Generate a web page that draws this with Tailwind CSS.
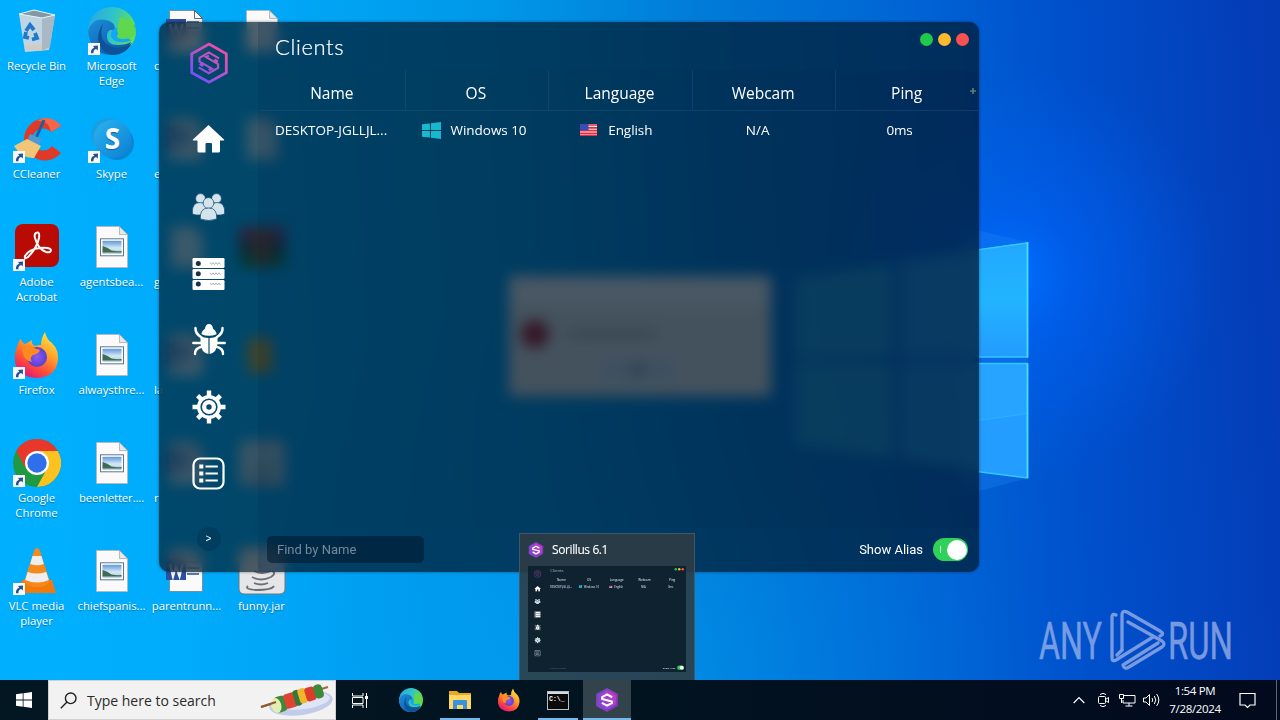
<!DOCTYPE html>
<html lang="en">
<head>
    <meta charset="UTF-8">
    <meta name="viewport" content="width=device-width, initial-scale=1.0">
    <title>Sorillus 6.1</title>
    <script src="https://cdn.jsdelivr.net/npm/@tailwindcss/browser@4"></script>
</head>
<body class="relative w-[1280px] h-[720px] overflow-hidden bg-[#0068d4] font-['Open_Sans','Noto_Sans',sans-serif] text-white">

    <!-- Shared icons -->
    <svg class="absolute w-0 h-0" aria-hidden="true">
        <defs>
            <linearGradient id="brand" gradientUnits="userSpaceOnUse" x1="4" y1="38" x2="34" y2="6"><stop offset="0" stop-color="#6a50ff"/><stop offset=".5" stop-color="#b452d0"/><stop offset="1" stop-color="#f0509a"/></linearGradient>
            <linearGradient id="brandFill" x1="0" y1="0" x2="1" y2="1"><stop offset="0" stop-color="#5b4fc4"/><stop offset=".5" stop-color="#9a3cc4"/><stop offset="1" stop-color="#6a35a8"/></linearGradient>
            <linearGradient id="brandCore" x1="0" y1="1" x2="1" y2="0"><stop offset="0" stop-color="#6d48d8"/><stop offset="1" stop-color="#d03cc0"/></linearGradient>
            <linearGradient id="edgeTop" x1="0" y1=".3" x2="1" y2=".5"><stop offset="0" stop-color="#2aa9e0"/><stop offset=".5" stop-color="#30c4c8"/><stop offset="1" stop-color="#6be04a"/></linearGradient>
            <linearGradient id="edgeLow" x1="0" y1="0" x2="1" y2="1"><stop offset="0" stop-color="#1a8fdd"/><stop offset="1" stop-color="#0f4f9e"/></linearGradient>
            <linearGradient id="fox" x1=".9" y1="0" x2=".3" y2="1"><stop offset="0" stop-color="#fff04a"/><stop offset=".4" stop-color="#ffa52a"/><stop offset=".75" stop-color="#ff4a3a"/><stop offset="1" stop-color="#e0157f"/></linearGradient>
            <radialGradient id="foxCore"><stop offset="0" stop-color="#8a5af0"/><stop offset="1" stop-color="#5b3fd0"/></radialGradient>
            <linearGradient id="photo" x1="0" y1="0" x2="0" y2="1"><stop offset="0" stop-color="#5f97dc"/><stop offset=".55" stop-color="#d4e8f4"/><stop offset="1" stop-color="#a9c8d8"/></linearGradient>
            <linearGradient id="skypeBg" x1="0" y1="0" x2="1" y2="1"><stop offset="0" stop-color="#2bb4ee"/><stop offset="1" stop-color="#0a7fd4"/></linearGradient>
        </defs>
        <symbol id="logo" viewBox="0 0 38 42">
            <path d="M19 2 36.300 11.800V30.600L19 40.200 1.700 30.600V11.800z" fill="none" stroke="url(#brand)" stroke-width="2.800"/>
            <path d="M29 16.300 18.800 10.400 9.500 15.800V19.600L21.800 26.700 18.600 28M8.600 25.300 18.800 31.200 28.100 25.800V22L15.800 14.900 19 13.600M28 19.500 24.500 17.500M9.600 22.100 13.100 24.100" fill="none" stroke="url(#brand)" stroke-width="2.100"/>
        </symbol>
        <symbol id="logoSolid" viewBox="0 0 38 42">
            <path d="M19 0 38 10.500V31.500L19 42 0 31.500V10.500z" fill="url(#brandFill)"/>
            <path d="M19 4 34.500 12.700V29.300L19 38 3.500 29.300V12.700z" fill="url(#brandCore)"/>
            <path d="M28 16.200 19 11.200 10.500 16V19.200L27.500 23.500V26.500L19 31 10 26" fill="none" stroke="#fff" stroke-width="3.600" stroke-linejoin="round"/>
        </symbol>
        <symbol id="home" viewBox="0 0 33 30"><path d="M16.500 1 32 15.500q.8 1-.5 1H28V27q0 1.500-1.500 1.500H20V20q0-1-1-1h-4.500q-1 0-1 1v8.500H7Q5.500 28.500 5.500 27V16.500H1.500q-1.300 0-.5-1z" fill="#fff"/></symbol>
        <symbol id="users" viewBox="0 0 33 28">
            <g fill="#d5e3ec" stroke="#0b4a6c" stroke-width=".7">
                <circle cx="8.500" cy="5.500" r="4.900"/><circle cx="24.500" cy="5.500" r="4.900"/>
                <path d="M.4 21q-1-11.500 7.600-11.500t7.500 12.500H4z"/><path d="M32.600 21q1-11.500-7.600-11.500t-7.500 12.500H29z"/>
                <circle cx="16.500" cy="10" r="5.400"/><path d="M8.300 26q-.8-11 8.200-11t8.200 11q-8 3-16.400 0z"/>
            </g>
        </symbol>
        <symbol id="servers" viewBox="0 0 33 32">
            <g fill="#fff"><rect x=".5" y="0" width="32" height="10" rx="1.300"/><rect x=".5" y="11" width="32" height="10" rx="1.300"/><rect x=".5" y="22" width="32" height="10" rx="1.300"/></g>
            <g fill="#173347"><circle cx="6.300" cy="5.500" r="2.500"/><circle cx="6.300" cy="15.800" r="2.500"/><circle cx="6.300" cy="26" r="2.500"/></g>
            <path d="M18 4.500l1.500 2 1.500-2 1.500 2 1.500-2 1.500 2 1.500-2 1.500 2M18 14.800l1.500 2 1.500-2 1.500 2 1.500-2 1.500 2 1.500-2 1.500 2M18 25l1.500 2 1.500-2 1.500 2 1.500-2 1.500 2 1.500-2 1.500 2" fill="none" stroke="#a3adb3" stroke-width=".9"/>
        </symbol>
        <symbol id="bug" viewBox="0 0 34 33">
            <path d="M9.500 11.300q0-3.500 3.500-5.600Q13.500 1 17 1t4 4.700q3.500 2.100 3.500 5.600-7.500 3-15 0z" fill="#fff"/>
            <path d="M8.500 13q3.500 2 7.900 2v16Q9 29.500 8.500 20zM25.500 13q-3.500 2-7.900 2v16Q25 29.500 25.500 20z" fill="#fff"/>
            <path d="M3.500 5Q3 10.500 9.500 14.500M30.500 5q.5 5.500-6 9.500M1.300 20h8M24.700 20h8M3 31q-.5-5.500 7-7.500M31 31q.5-5.500-7-7.500" fill="none" stroke="#fff" stroke-width="2.400" stroke-linecap="round"/>
        </symbol>
        <symbol id="gear" viewBox="0 0 34 34">
            <g stroke="#fff" stroke-width="4.400"><path d="M17 .5v33M.5 17h33M5.600 5.600l22.800 22.800M28.400 5.600 5.600 28.400"/></g>
            <circle cx="17" cy="17" r="12" fill="#fff"/><circle cx="17" cy="17" r="7.800" fill="none" stroke="#07486c" stroke-width="1.600"/><circle cx="17" cy="17" r="2.700" fill="#07486c"/>
        </symbol>
        <symbol id="list" viewBox="0 0 33 33">
            <rect x="1.500" y="1.500" width="30" height="30" rx="6.500" fill="none" stroke="#fff" stroke-width="2.200"/>
            <path d="M7.300 9.500h4M7.300 16.500h4M7.300 23.500h4" stroke="#fff" stroke-width="4"/><path d="M13.500 9.500h12.300M13.500 16.500h12.300M13.500 23.500h12.300" stroke="#fff" stroke-width="2"/>
        </symbol>
        <symbol id="win" viewBox="0 0 16 16"><path d="M0 2.200 6.700 1.300V7.600H0zM7.500 1.200 16 0v7.600H7.500zM0 8.400h6.700v6.300L0 13.800zM7.500 8.400H16V16l-8.500-1.200z" fill="currentColor"/></symbol>
        <symbol id="flag" viewBox="0 0 17 12">
            <rect width="17" height="12" fill="#f4f4f4"/><path d="M0 1h17M0 3.800h17M0 6.600h17M0 9.400h17M0 11.500h17" stroke="#e8283c" stroke-width="1.700"/><rect width="8.500" height="6.500" fill="#3a4cb4"/>
        </symbol>
        <symbol id="shortcut" viewBox="0 0 12 12"><rect width="12" height="12" fill="#f7f9fb"/><path d="M3 10.300Q2.500 5.800 6.300 4.800L5 3l5-.6-.2 5-1.700-1.300Q5.200 7 5.400 10.300z" fill="#27508f"/></symbol>
        <symbol id="sheet" viewBox="0 0 48 48"><path d="M8.500 3.500h23l8 8v33h-31z" fill="#fafafa" stroke="#bdb5ae" stroke-width=".8"/><path d="M31.500 3.500v8h8z" fill="#e2e8ee" stroke="#a5a09c" stroke-width=".7"/></symbol>
        <symbol id="imageDoc" viewBox="0 0 48 48">
            <use href="#sheet" width="48" height="48"/>
            <rect x="12.500" y="15.800" width="23" height="17" fill="#fff" stroke="#5d7690" stroke-width="1"/><rect x="14.500" y="17.800" width="19" height="13" fill="url(#photo)"/><path d="M14.500 23q5 1 9 4.500 5 1 10 .5v1.500h-19z" fill="#3f6b50"/>
        </symbol>
        <symbol id="wordDoc" viewBox="0 0 48 48">
            <path d="M8.500 3.500h23l8 8v33h-33v-41z" fill="#fafafa" stroke="#77808a" stroke-width=".8"/><path d="M31.500 3.500v8h8z" fill="#fff" stroke="#444" stroke-width=".8"/>
            <path d="M24 15h12M24 21h12M24 27h12" stroke="#2b4f9c" stroke-width="1.500"/><rect x="3" y="12" width="20" height="21" fill="#2b4fa3"/><path d="m7 17 3 12 3-10 3.500 10 3-12" fill="none" stroke="#fff" stroke-width="2.500"/>
        </symbol>
        <symbol id="edge" viewBox="0 0 48 48">
            <circle cx="24" cy="24" r="24" fill="url(#edgeTop)"/>
            <path d="M0 24Q4 10 18 13q10 2 9 11-7-3-8 4-1 10 11 10 8 0 13-3-6 13-20 13Q2 47 0 24z" fill="url(#edgeLow)"/>
            <path d="M15 17q-6 18 10 23 12 2 19-4-6 12-20 12-12-3-14-15 0-10 5-16z" fill="#0e5299"/>
            <path d="M27 21q-5 4-4 8 1 5 8 6 8 1 13-2-3 0-4-2 7-3 8-8 0-3-1-5z" fill="#10a8f6"/>
            <path d="M29 24q2 2 0 5 0 3 6 3 8 0 12-6l1-3-4-9-12-4z" fill="#5fd84e"/>
        </symbol>
        <symbol id="firefox" viewBox="0 0 48 48">
            <path d="M5 13q1-4 3-5 1 4 4 5l7-4q-1 4 3 6 3-1 6-1 0-7 4-13 2 8 7 11 7 7 6 17-2 17-21 18Q5 46 2 31q-1-10 3-18z" fill="url(#fox)"/>
            <circle cx="24" cy="26" r="10" fill="url(#foxCore)"/><path d="M8 15q8-3 13 2l6 2q-1 4-7 5-4 3-1 7-9-2-9-10z" fill="#ff8a22"/>
        </symbol>
        <symbol id="bin" viewBox="0 0 48 48">
            <path d="M6 7 42 8 36 43 12 45z" fill="#cfd9e0" opacity=".92"/><path d="M29 11 42 8 37 40 29 44z" fill="#a9b8c4"/><path d="M6 7 21 3 42 8 29 11z" fill="#8397a5" stroke="#eef3f6"/>
            <path d="M12 38l17 1v5l-15-2z" fill="#dcc7b4" opacity=".8"/>
            <path d="m13 24 4-6 4 5M22 26l2 5-5 1.500M16 31l-4-1 1-5" fill="none" stroke="#1f78cc" stroke-width="3.800"/>
        </symbol>
        <symbol id="ccleaner" viewBox="0 0 48 48">
            <path d="M48 11A21 21 0 1 0 48 38L39 31A11 11 0 1 1 38 17z" fill="#e03a26"/><path d="M48 11q-6-9-18-8l-6 3q12-1 14 11z" fill="#f4674a"/>
            <path d="m31 5-8 18" stroke="#1f5fa0" stroke-width="3"/><path d="m17 19 12 5-4 7-11-5z" fill="#4c9bd2"/><path d="M14 24 1 31q8 13 20 12l7-12z" fill="#f2c679"/>
        </symbol>
        <symbol id="acrobat" viewBox="0 0 48 48">
            <rect x="2" y="1" width="44" height="43" rx="8" fill="#b90b04"/>
            <path d="M23 10q4-2 3 5-2 10-11 19-4 3-3-1 4-7 15-8 10-1 11 2 0 3-5 2-8-3-11-14-1-4 1-5z" fill="none" stroke="#fff" stroke-width="2"/>
        </symbol>
        <symbol id="chrome" viewBox="0 0 48 48">
            <circle cx="24" cy="24" r="24" fill="#1e9a45"/><path d="M3.200 12A24 24 0 0 1 44.800 12L24 13 13 30z" fill="#e8372b"/><path d="M24 12H44.800A24 24 0 0 1 24 48L35 28z" fill="#fcc320"/><circle cx="24" cy="24" r="12" fill="#fff"/><circle cx="24" cy="24" r="9.700" fill="#2f6fea"/>
        </symbol>
        <symbol id="vlc" viewBox="0 0 48 48">
            <path d="M9 33h30l4 13H5z" fill="#f27a0c"/><path d="M24 1q2 0 3 3l10 31q-4 5-13 5t-13-5L21 4q1-3 3-3z" fill="#f58a1c"/>
            <path d="M19.500 9h9l2.300 8q-6 2.500-13.600 0zM14.700 25q9 3 18.600 0l2.500 8q-11 5-23.600 0z" fill="#eee"/>
        </symbol>
        <symbol id="java" viewBox="0 0 48 48">
            <rect x="1" y="1" width="46" height="46" rx="5" fill="#e6e6e8" stroke="#777" stroke-width="1"/>
            <path d="M25 7q-8 6-2 13M16 24q8 4 17 0M14 30q9 5 19 0M16 36q7 3 14 0M34 24q5 2-1 6M10 39q-4 3 8 4 16 0 18-4" fill="none" stroke="#6b7078" stroke-width="1.800"/>
        </symbol>
    </svg>

    <!-- Wallpaper -->
    <svg class="absolute inset-0" width="1280" height="720" viewBox="0 0 1280 720" aria-hidden="true">
        <defs>
            <linearGradient id="sky" gradientUnits="userSpaceOnUse" x1="0" y1="400" x2="1280" y2="330">
                <stop offset="0" stop-color="#00b0ff"/><stop offset=".22" stop-color="#00a9f8"/><stop offset=".4" stop-color="#0098e8"/><stop offset=".56" stop-color="#007cd8"/><stop offset=".74" stop-color="#0062d4"/><stop offset=".84" stop-color="#0050cc"/><stop offset="1" stop-color="#043cb6"/>
            </linearGradient>
            <radialGradient id="glow" gradientUnits="userSpaceOnUse" cx="1010" cy="275" r="210"><stop offset="0" stop-color="#0070ff"/><stop offset=".3" stop-color="#0064fa" stop-opacity=".6"/><stop offset="1" stop-color="#0060f0" stop-opacity="0"/></radialGradient>
            <radialGradient id="low" gradientUnits="userSpaceOnUse" cx="600" cy="700" r="420"><stop offset="0" stop-color="#00a0f8" stop-opacity=".5"/><stop offset="1" stop-color="#0080e8" stop-opacity="0"/></radialGradient>
            <linearGradient id="pane" x1="0" y1="0" x2="0" y2="1"><stop offset="0" stop-color="#22a8ff"/><stop offset=".5" stop-color="#22b4ff"/><stop offset="1" stop-color="#239bff"/></linearGradient>
        </defs>
        <rect width="1280" height="720" fill="url(#sky)"/>
        <rect width="1280" height="720" fill="url(#low)"/>
        <rect width="1280" height="720" fill="url(#glow)"/>
        <path d="M960 226 1028 242V478L960 496z" fill="#1a80f4" opacity=".35"/>
        <path d="M795 278 893 263V357H795zM795 363H893V458L795 446z" fill="#22a0e0" opacity=".85"/>
        <path d="M900 261 979 249.500V357H900zM900 363H979V471L900 459z" fill="#2296ee" opacity=".85"/>
        <path d="M977 249.500 1028 242V357H977z" fill="url(#pane)"/>
        <path d="M977 363H1028V478L977 471z" fill="#239dff"/>
        <path d="M977 363H1028V413L977 420z" fill="#27a4ff"/>
        <path d="M977 420.500 1028 413.500" stroke="#2cb2ff"/>
        <path d="M977 249.800 1027.500 243V357H977M977 363.500h50.500V478L977 471.500" fill="none" stroke="#35c8ff" stroke-width="1.300"/>
        <path d="M1027.500 242V357.500M1027.500 363.500V478" stroke="#46e0ff" stroke-width="1.700"/>
    </svg>

    <!-- Desktop icons -->
    <div class="absolute -left-[1px] top-[7px] grid grid-flow-col grid-rows-[repeat(6,108px)] auto-cols-[75px] text-center text-[11.3px] leading-[15px] [text-shadow:0_1px_1px_rgba(0,0,0,0.35)]">
        <div class="flex flex-col items-center"><svg class="size-12 mb-[3px]"><use href="#bin"/></svg><span class="whitespace-nowrap">Recycle Bin</span></div>
        <div class="relative flex flex-col items-center"><svg class="size-12 mb-[3px]"><use href="#ccleaner"/></svg><svg class="absolute left-[13.5px] top-[36px] size-3"><use href="#shortcut"/></svg><span>CCleaner</span></div>
        <div class="relative flex flex-col items-center"><svg class="size-12 mb-[3px]"><use href="#acrobat"/></svg><svg class="absolute left-[13.5px] top-[36px] size-3"><use href="#shortcut"/></svg><span>Adobe<br>Acrobat</span></div>
        <div class="relative flex flex-col items-center"><svg class="size-12 mb-[3px]"><use href="#firefox"/></svg><svg class="absolute left-[13.5px] top-[36px] size-3"><use href="#shortcut"/></svg><span>Firefox</span></div>
        <div class="relative flex flex-col items-center"><svg class="size-12 mb-[3px]"><use href="#chrome"/></svg><svg class="absolute left-[13.5px] top-[36px] size-3"><use href="#shortcut"/></svg><span>Google<br>Chrome</span></div>
        <div class="relative flex flex-col items-center"><svg class="size-12 mb-[3px]"><use href="#vlc"/></svg><svg class="absolute left-[13.5px] top-[36px] size-3"><use href="#shortcut"/></svg><span class="whitespace-nowrap">VLC media<br>player</span></div>

        <div class="relative flex flex-col items-center"><svg class="size-12 mb-[3px]"><use href="#edge"/></svg><svg class="absolute left-[13.5px] top-[36px] size-3"><use href="#shortcut"/></svg><span>Microsoft<br>Edge</span></div>
        <div class="relative flex flex-col items-center">
            <svg class="size-12 mb-[3px]" viewBox="0 0 48 48"><circle cx="20" cy="20" r="17" fill="#1b9de2"/><circle cx="29" cy="28" r="17" fill="#0a85d2"/><circle cx="24.500" cy="24" r="19" fill="url(#skypeBg)"/><text x="24.500" y="34" text-anchor="middle" font-family="Open Sans" font-weight="700" font-size="28" fill="#fff">S</text></svg>
            <svg class="absolute left-[13.5px] top-[36px] size-3"><use href="#shortcut"/></svg><span>Skype</span>
        </div>
        <div class="flex flex-col items-center"><svg class="size-12 mb-[3px]"><use href="#imageDoc"/></svg><span>agentsbea...</span></div>
        <div class="flex flex-col items-center"><svg class="size-12 mb-[3px]"><use href="#imageDoc"/></svg><span>alwaysthre...</span></div>
        <div class="flex flex-col items-center"><svg class="size-12 mb-[3px]"><use href="#imageDoc"/></svg><span class="tracking-[-0.1px]">beenletter....</span></div>
        <div class="flex flex-col items-center"><svg class="size-12 mb-[3px]"><use href="#imageDoc"/></svg><span>chiefspanis...</span></div>

        <div class="flex flex-col"><svg class="size-12 mb-[3px] self-center"><use href="#wordDoc"/></svg><span class="self-start ml-[5px]">c</span></div>
        <div class="flex flex-col"><svg class="size-12 mb-[3px] self-center opacity-80"><use href="#wordDoc"/></svg><span class="self-start ml-[5px]">e</span></div>
        <div class="flex flex-col"><svg class="size-12 mb-[3px] self-center opacity-70"><use href="#sheet"/></svg><span class="self-start ml-[5px]">g</span></div>
        <div class="flex flex-col"><svg class="size-12 mb-[3px] self-center opacity-80"><use href="#wordDoc"/></svg><span class="self-start ml-[5px]">la</span></div>
        <div class="flex flex-col"><svg class="size-12 mb-[3px] self-center opacity-80"><use href="#wordDoc"/></svg><span class="self-start ml-[5px]">r</span></div>
        <div class="flex flex-col items-center"><svg class="size-12 mb-[3px]"><use href="#wordDoc"/></svg><span class="whitespace-nowrap">parentrunn...</span></div>

        <div class="flex justify-center"><svg class="size-12"><use href="#sheet"/></svg></div>
        <div class="flex justify-center"><svg class="size-12 opacity-70"><use href="#sheet"/></svg></div>
        <div class="flex justify-center"><svg class="size-12" viewBox="0 0 48 48"><path d="M1 4h46v15H1z" fill="#8a3868"/><path d="M1 17h46v14H1z" fill="#384858"/><path d="M1 30h46v14H1z" fill="#107838"/><path d="M17 4h14v38H17z" fill="#885038"/></svg></div>
        <div class="flex justify-center"><svg class="size-12" viewBox="0 0 48 48"><path d="M10 7h24v35H10z" fill="#c0a038"/></svg></div>
        <div class="flex justify-center"><svg class="size-12 opacity-75"><use href="#java"/></svg></div>
        <div class="flex flex-col items-center"><svg class="size-12 mb-[3px]"><use href="#java"/></svg><span>funny.jar</span></div>
    </div>

    <!-- Dialog behind the client window -->
    <div class="absolute left-[509px] top-[276px] w-[262px] h-[120px] bg-[#e4e2e0] border-t-[30px] border-[#f2f2f2] flex">
        <div class="size-7 rounded-full bg-[#b01c28] mt-[14px] ml-[12px]"></div>
        <div class="w-[90px] h-[8px] bg-[#b4b4b4] mt-[24px] ml-[18px]"></div>
        <div class="absolute left-[92px] top-[52px] w-[74px] h-[24px] bg-[#d0d8e8] flex items-center justify-center"><i class="size-[12px] bg-[#9aa0a8]"></i></div>
    </div>

    <!-- Watermark -->
    <svg class="absolute left-[1036px] top-[606px]" width="210" height="70" viewBox="0 0 210 70">
        <g fill="#a9bcec" stroke="#a9bcec" stroke-width=".5" opacity=".7" font-family="Roboto" font-size="52">
            <text x="3" y="53" textLength="63" lengthAdjust="spacingAndGlyphs">ANY</text>
            <text x="132" y="53" textLength="65" lengthAdjust="spacingAndGlyphs">RUN</text>
        </g>
        <g fill="none" stroke="#a9bcec" stroke-width="3.300" opacity=".7" stroke-linejoin="round" stroke-linecap="round">
            <path d="M80 9q-4-2-4 2V52q0 4 4 2L117 31"/>
            <path d="M86 44V9q0-5 5-3L124 25q5 3 0 5"/>
            <path d="M92 16l34 19q4 3 0 6L93 61q-5 3-6-2l35-22"/>
            <path d="M86 44 81 49"/>
        </g>
    </svg>

    <!-- Client window -->
    <div class="absolute left-[159px] top-[22px] w-[820px] h-[550px] rounded-[10px] overflow-hidden bg-[#001624]/67 backdrop-blur-[7px] flex shadow-[0_0_3px_rgba(0,20,50,0.5)]">
        <nav class="w-[99px] shrink-0 flex flex-col items-center pt-[20px]">
            <svg class="w-[38px] h-[42px] mb-[40px]"><use href="#logo"/></svg>
            <svg class="w-[33px] h-[30px] mb-[39px]"><use href="#home"/></svg>
            <svg class="w-[33px] h-[28px] mb-[37px]"><use href="#users"/></svg>
            <svg class="w-[33px] h-[32px] mb-[33px]"><use href="#servers"/></svg>
            <svg class="w-[34px] h-[33px] mb-[34px]"><use href="#bug"/></svg>
            <svg class="w-[34px] h-[34px] mb-[33px]"><use href="#gear"/></svg>
            <svg class="w-[33px] h-[33px] mb-[37px]"><use href="#list"/></svg>
            <div class="size-6 rounded-full bg-[#003352]/50 flex items-center justify-center font-['Liberation_Sans'] text-[10px] leading-none">&gt;</div>
        </nav>
        <main class="flex-1 flex flex-col bg-[#001438]/10">
            <header class="h-[48px] flex items-start justify-between pl-[17px] pr-[10px] bg-[#004070]/15">
                <h1 class="font-['Lato'] font-light text-[22px] leading-[28px] tracking-[0.6px] mt-[11px] [-webkit-text-stroke:0.2px_#fff]">Clients</h1>
                <div class="flex gap-[5px] mt-[11px]">
                    <i class="size-[13px] rounded-full bg-[#1fc94a]"></i>
                    <i class="size-[13px] rounded-full bg-[#fdb92c]"></i>
                    <i class="size-[13px] rounded-full bg-[#f8514f]"></i>
                </div>
            </header>
            <section class="relative grid grid-cols-5 w-[718px] ml-[3px] h-[41px] text-[15.5px] text-center leading-[40px] border-b border-[#1f5a80]/40">
                <div class="pt-[3px] pr-[2px] h-10">Name</div>
                <div class="pt-[3px] pr-[2px] h-10 border-l border-[#1f5a80]/40">OS</div>
                <div class="pt-[3px] pr-[2px] h-10 border-l border-[#1f5a80]/40">Language</div>
                <div class="pt-[3px] pr-[2px] h-10 border-l border-[#1f5a80]/40">Webcam</div>
                <div class="pt-[3px] pr-[2px] h-10 border-l border-[#1f5a80]/40">Ping</div>
                <svg class="absolute right-[3px] top-[18px] size-[6px]" viewBox="0 0 7 7"><path d="M3.500 0v7M0 3.500h7" stroke="#607a70" stroke-width="2"/></svg>
            </section>
            <section class="grid grid-cols-5 w-[718px] ml-[3px] h-[38px] text-[13.5px] items-center">
                <div class="pl-[14px] whitespace-nowrap">DESKTOP-JGLLJL...</div>
                <div class="flex items-center pl-[17px] gap-[10px]"><svg class="w-[19px] h-[17px] text-[#18b8cf]" viewBox="0 0 16 16" preserveAspectRatio="none"><path d="M0 2.200 6.700 1.300V7.600H0zM7.500 1.200 16 0v7.600H7.500zM0 8.400h6.700v6.300L0 13.800zM7.500 8.400H16V16l-8.500-1.200z" fill="currentColor"/></svg><span class="tracking-[-0.05px]">Windows 10</span></div>
                <div class="flex items-center pl-[32px] gap-[11px]"><svg class="w-[17px] h-[12px]"><use href="#flag"/></svg><span class="tracking-[-0.05px]">English</span></div>
                <div class="pl-[54px]">N/A</div>
                <div class="pl-[51px] tracking-[-0.2px]">0ms</div>
            </section>
            <footer class="mt-auto h-[44px] flex items-center justify-between pl-[9px] pr-[11px] bg-[#004070]/15 font-['Roboto'] text-[13px]">
                <div class="w-[157px] h-[27px] mb-[2px] rounded-[5px] bg-[#001a30]/60 pl-[10px] leading-[27px] text-[#76899a]">Find by Name</div>
                <div class="flex items-center gap-[10px] mb-[1px]">
                    <span>Show Alias</span>
                    <div class="w-[35px] h-[23px] rounded-full bg-[#30d158] p-[1.5px] flex items-center justify-end gap-[6px]"><i class="w-px h-[7px] bg-white/80"></i><i class="size-5 rounded-full bg-white"></i></div>
                </div>
            </footer>
        </main>
    </div>

    <!-- Taskbar preview -->
    <div class="absolute left-[519px] top-[533px] w-[176px] h-[147px] border border-b-0 border-[#4b6476]/70 bg-[#2e3b42]/88 px-2">
        <div class="h-8 flex items-center gap-2 text-[12px]"><svg class="w-4 h-4"><use href="#logoSolid"/></svg><span class="tracking-[-0.4px] [-webkit-text-stroke:0.1px_#fff]">Sorillus 6.1</span></div>
        <svg class="block bg-[#0e2230]" width="158" height="106" viewBox="0 0 820 550">
            <use href="#logo" x="30" y="20" width="38" height="42" opacity=".7"/><use href="#home" x="33" y="102" width="34" height="32"/><use href="#users" x="33" y="170" width="33" height="28"/><use href="#servers" x="33" y="235" width="33" height="33"/><use href="#bug" x="33" y="302" width="34" height="33"/><use href="#gear" x="33" y="368" width="34" height="34"/><use href="#list" x="33" y="436" width="33" height="33"/>
            <g fill="#e4ebf0" font-family="Open Sans" font-size="16" text-anchor="middle">
                <text x="150" y="33" font-size="22" fill="#9fb2bf">Clients</text>
                <text x="173" y="76">Name</text><text x="317" y="76">OS</text><text x="460" y="76">Language</text><text x="604" y="76">Webcam</text><text x="748" y="76">Ping</text>
                <text x="172" y="113" font-size="14">DESKTOP-JGLLJL...</text><text x="329" y="113" font-size="14">Windows 10</text><text x="471" y="113" font-size="14">English</text><text x="599" y="113" font-size="14">N/A</text><text x="740" y="113" font-size="14">0ms</text>
                <text x="732" y="532" font-size="13">Show Alias</text><text x="157" y="532" font-size="13" fill="#5d6c78">Find by Name</text>
            </g>
            <use href="#win" x="263" y="99" width="19" height="17" color="#18b8cf"/><use href="#flag" x="421" y="102" width="17" height="12"/>
            <circle cx="767" cy="17" r="6.500" fill="#1fc94a"/><circle cx="785" cy="17" r="6.500" fill="#fdb92c"/><circle cx="803" cy="17" r="6.500" fill="#f8514f"/>
            <rect x="774" y="516" width="35" height="23" rx="11.500" fill="#30d158"/><circle cx="798" cy="527.500" r="10" fill="#fff"/>
        </svg>
    </div>

    <!-- Taskbar -->
    <div class="absolute left-0 bottom-0 w-full h-10 flex bg-linear-to-r from-[#021722] via-[#021320] to-[#020a1e]">
        <div class="w-12 flex items-center justify-center"><svg class="size-4"><use href="#win"/></svg></div>
        <div class="w-72 bg-[#f2f2f2] border border-[#d0d0d0] flex items-center text-[#2b2b2b] text-[14px]">
            <svg class="ml-[11px] size-[17px]" viewBox="0 0 17 17" fill="none" stroke="#222" stroke-width="1.400"><circle cx="10.700" cy="6.300" r="5.300"/><path d="M7 10 .8 16.200"/></svg>
            <span class="ml-[10px]">Type here to search</span>
            <svg class="ml-auto mr-[1px]" width="74" height="36" viewBox="0 0 74 36">
                <ellipse cx="41" cy="21" rx="32" ry="12" transform="rotate(-8 41 21)" fill="#c3cbea"/><ellipse cx="44" cy="19" rx="26" ry="8" transform="rotate(-8 44 19)" fill="#dfe4f6"/>
                <path d="M1 25 68 5" stroke="#a3683a" stroke-width="2"/>
                <g transform="rotate(-17 37 16)"><rect x="12" y="9" width="15" height="16" rx="6" fill="#3f8a3a"/><rect x="24" y="9" width="12" height="15" rx="3" fill="#e0432e"/><rect x="34" y="8" width="7" height="16" rx="3" fill="#2f7a38"/><rect x="39" y="8" width="8" height="15" rx="3" fill="#f2b52e"/><rect x="46" y="9" width="10" height="14" rx="3" fill="#dc3c2c"/><rect x="55" y="9" width="9" height="14" rx="4" fill="#3f8a3a"/><ellipse cx="15" cy="17" rx="5" ry="7.500" fill="#e4edb4"/></g>
                <path d="M1 25 16 20" stroke="#8f5a30" stroke-width="2"/>
            </svg>
        </div>
        <div class="w-12 flex items-center justify-center">
            <svg width="17" height="17" viewBox="0 0 17 17" fill="none" stroke="#fff"><path d="M.5 1v3h10.500V1M.5 16v-3h10.500v3M.5 5.500h10.500v6H.5zM14.500 1v15"/><path d="M13 5.500h3" stroke-width="3"/></svg>
        </div>
        <div class="ml-[3px] flex gap-px">
            <div class="w-12 flex items-center justify-center"><svg class="size-6"><use href="#edge"/></svg></div>
            <div class="relative w-12 flex items-center justify-center">
                <svg width="22" height="20" viewBox="0 0 22 20"><path d="M0 1h8l2 2h12v16H0z" fill="#e8a91c"/><path d="M0 5h22v14H0z" fill="#ffd767"/><path d="M4 19v-8q0-1 1-1h12q1 0 1 1v8h-4v-4H8v4z" fill="#3a92dc"/></svg>
                <i class="absolute bottom-0 inset-x-1 h-0.5 bg-[#76b9ed]"></i>
            </div>
            <div class="w-12 flex items-center justify-center"><svg class="size-6"><use href="#firefox"/></svg></div>
            <div class="relative w-12 flex items-center justify-center">
                <svg width="22" height="19" viewBox="0 0 22 19"><rect x=".5" y=".5" width="21" height="18" fill="#0a0a0a" stroke="#b8bec2"/><path d="M1 2h20" stroke="#d5dadd" stroke-width="2"/><text x="2" y="10" font-family="Liberation Mono" font-size="6.500" font-weight="700" fill="#fff">C:\_</text></svg>
                <i class="absolute bottom-0 inset-x-1 h-0.5 bg-[#76b9ed]"></i>
            </div>
            <div class="relative w-12 flex items-center justify-center bg-[#33434c]"><svg class="w-[22px] h-6"><use href="#logoSolid"/></svg><i class="absolute bottom-0 inset-x-0 h-0.5 bg-[#76b9ed]"></i></div>
        </div>
        <div class="ml-auto flex items-center">
            <svg class="mr-[12px]" width="12" height="8" viewBox="0 0 12 8"><path d="M.7 7 6 1.500 11.300 7" fill="none" stroke="#fff" stroke-width="1.200"/></svg>
            <svg class="mr-[9px]" width="13" height="16" viewBox="0 0 13 16" fill="none" stroke="#fff"><rect x="1.500" y="4.500" width="7" height="7" rx="1"/><path d="M8.500 7.500l3-2v5l-3-2M3 2.500q3-2.300 6 0M3 13.500q3 2.300 6 0"/></svg>
            <svg class="mr-[7px]" width="17" height="14" viewBox="0 0 17 14" fill="none" stroke="#fff"><path d="M5 2.500h11v7.500H4V7M10 10v3M6.500 13h7M.5 1.500h4v4h-4zM2.500 5.500V10"/></svg>
            <svg class="mr-[9px]" width="17" height="14" viewBox="0 0 17 14" fill="none" stroke="#fff"><path d="M.5 5h2.500l3.500-3.500v11L3 9H.5zM9 5q1.500 2 0 4M11.300 3q3 4 0 8M13.600 1q4.500 6 0 12"/></svg>
            <div class="w-[52px] text-center text-[11.5px] leading-[18px] tracking-[-0.35px] whitespace-nowrap">1:54 PM<br>7/28/2024</div>
            <svg class="ml-[18px] mr-[20px]" width="17" height="17" viewBox="0 0 17 17" fill="none" stroke="#fff" stroke-width="1.200"><path d="M1 1.500h15v11.500h-5L8.500 15.500 6 13H1z"/></svg>
            <i class="w-px h-10 bg-[#5a6674] mr-[3px]"></i>
        </div>
    </div>
</body>
</html>
